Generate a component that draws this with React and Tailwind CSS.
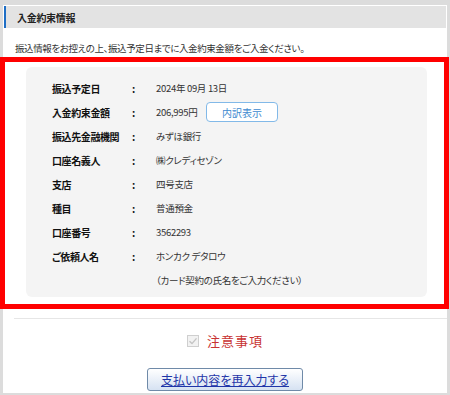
const jp = "font-['Noto_Sans_CJK_JP','Noto_Sans',sans-serif] [font-feature-settings:'palt']";

const rows = [
    { label: '振込予定日', value: '2024年 09月 13日' },
    { label: '入金約束金額', value: '206,995円', button: true },
    { label: '振込先金融機関', value: 'みずほ銀行' },
    { label: '口座名義人', value: '㈱クレディセゾン' },
    { label: '支店', value: '四号支店' },
    { label: '種目', value: '普通預金' },
    { label: '口座番号', value: '3562293' },
    { label: 'ご依頼人名', value: 'ホンカク デタロウ' },
    { label: '', value: '（カード契約の氏名をご入力ください）', noColon: true },
];

export default function App() {
    return (
        <div className={`relative w-[450px] h-[395px] bg-[#dcdcdc] pt-[5px] pl-[3px] pr-[3px] pb-[2px] ${jp}`}>
            <div className="h-full bg-white pt-px">
                {/* ── Section header ── */}
                <div className="mx-px h-[22px] bg-[#e3e3e3] border-l-2 border-[#1f6fc6] pl-[11px] flex items-center">
                    <p className="text-[10px] font-bold text-[#222] tracking-[-0.3px]">入金約束情報</p>
                </div>

                <p className="mt-[13px] pl-[12px] text-[9.5px] leading-[14px] tracking-[-0.4px] text-[#333]">
                    振込情報をお控えの上、振込予定日までに入金約束金額をご入金ください。
                </p>

                {/* ── Transfer details ── */}
                <div className="mt-[12px] ml-[23px] w-[401px] bg-[#f4f4f4] rounded-[6px] pt-[9px] pb-[5px]">
                    {rows.map((r, i) => (
                        <div key={i} className="h-[24px] flex items-center pl-[26px]">
                            <span className="w-[80px] shrink-0 text-[10px] font-bold tracking-[-0.4px] text-[#111]">{r.label}</span>
                            <span className="w-[24px] shrink-0 text-[10px] font-bold text-[#111]">{r.noColon ? '' : ':'}</span>
                            <span className={`text-[9.5px] tracking-[-0.3px] text-[#333] ${r.button ? 'w-[50px] shrink-0' : ''}`}>{r.value}</span>
                            {r.button && (
                                <button className="w-[72px] h-[20px] rounded-[4px] border-[1.5px] border-[#82b9e8] bg-white text-[10px] text-[#3d8ad0]">
                                    内訳表示
                                </button>
                            )}
                        </div>
                    ))}
                </div>

                <div className="mt-[21px] ml-[11px] h-px bg-[#e6e6e6]" />

                {/* ── Notes ── */}
                <div className="mt-[12px] h-[20px] flex items-center justify-center gap-[8px]">
                    <svg width="12" height="12" viewBox="0 0 12 12">
                        <rect x="0.5" y="0.5" width="11" height="11" fill="#f2f2f2" stroke="#cfcfcf" />
                        <path d="M2.5 6.2 L5 8.6 L9.5 3.4" fill="none" stroke="#c4c4c4" strokeWidth="1.4" />
                    </svg>
                    <span className="text-[13px] tracking-[1px] text-[#c83232]">注意事項</span>
                </div>

                <div className="mt-[17px] flex justify-center">
                    <button className="w-[156px] h-[23px] rounded-[3px] border border-[#6f8aa8] bg-gradient-to-b from-white to-[#d6e2f2] text-[12px] text-[#1f35a8] underline">
                        支払い内容を再入力する
                    </button>
                </div>
            </div>

            {/* red highlight overlay */}
            <div className="absolute left-0 top-[57px] w-[449px] h-[252px] border-[5px] border-[#ff0000] pointer-events-none" />
        </div>
    );
}
